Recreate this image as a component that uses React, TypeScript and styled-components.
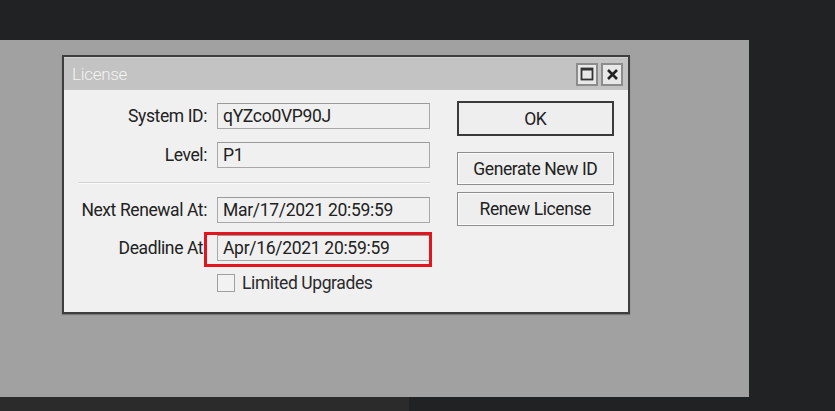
import React from "react";
import styled, { createGlobalStyle } from "styled-components";

const Global = createGlobalStyle`
  html, body { margin: 0; padding: 0; background: #212224; }
  body { font-family: Roboto, "Liberation Sans", sans-serif; }
`;

const Page = styled.div`
  width: 835px;
  height: 411px;
  display: flex;
  flex-direction: column;
  background: #212224;
  overflow: hidden;
`;

const TopBand = styled.div`
  height: 40px;
  flex: none;
`;

const Stage = styled.div`
  width: 749px;
  height: 357px;
  flex: none;
  background: #a1a1a1;
  padding: 15px 0 0 62px;
  box-sizing: border-box;
`;

const BottomBand = styled.div`
  display: flex;
  height: 14px;
`;

const BottomLeft = styled.div`
  width: 409px;
  background: #2b2b2b;
`;

const Dialog = styled.div`
  width: 568px;
  height: 259px;
  box-sizing: border-box;
  border: 2px solid #3e3e3e;
  background: #f0f0f0;
  display: flex;
  flex-direction: column;
  box-shadow: 0 1px 1px rgba(0, 0, 0, 0.25);
`;

const TitleBar = styled.div`
  height: 33px;
  flex: none;
  background: #c3c3c3;
  border-top: 1px solid #d0d0d0;
  box-sizing: border-box;
  display: flex;
  align-items: center;
  justify-content: space-between;
  padding: 0 5px 0 8px;
`;

const Title = styled.span`
  color: #f4f4f4;
  font-size: 17px;
  font-weight: 300;
  letter-spacing: -0.3px;
`;

const WinButtons = styled.div`
  display: flex;
  gap: 3px;
`;

const WinButton = styled.div`
  width: 22px;
  height: 23px;
  box-sizing: border-box;
  border: 2px solid #8c8c8c;
  background: #e8e8e8;
  display: flex;
  align-items: center;
  justify-content: center;
`;

const Body = styled.div`
  display: flex;
  padding: 11px 14px 0 0;
`;

const Form = styled.div`
  display: grid;
  grid-template-columns: 143px 213px;
  column-gap: 10px;
  align-items: center;
  width: 368px;
`;

const Label = styled.div<{ $mt?: number }>`
  text-align: right;
  font-size: 17.5px;
  color: #222;
  letter-spacing: -0.4px;
  white-space: nowrap;
  margin-top: ${(p) => p.$mt ?? 0}px;
`;

const Field = styled.div<{ $mt?: number }>`
  height: 26px;
  box-sizing: border-box;
  border: 1px solid #a8a8a8;
  border-top-color: #9a9a9a;
  background: #f0f0f0;
  display: flex;
  align-items: center;
  padding-left: 5px;
  font-size: 17.5px;
  color: #222;
  letter-spacing: -0.3px;
  white-space: nowrap;
  margin-top: ${(p) => p.$mt ?? 0}px;
`;

const Highlighted = styled.div`
  position: relative;
  margin-top: 12px;
  &::after {
    content: "";
    position: absolute;
    left: -13px;
    right: -2px;
    top: -3px;
    bottom: -6px;
    border: 3px solid #e3141c;
    pointer-events: none;
  }
`;

const Separator = styled.div`
  grid-column: 1 / span 2;
  margin: 14px 0 13px 14px;
  height: 0;
  border-top: 1px solid #d4d4d4;
  border-bottom: 1px solid #fafafa;
`;

const CheckRow = styled.label`
  grid-column: 2;
  display: flex;
  align-items: center;
  gap: 7px;
  margin-top: 12px;
  font-size: 17.5px;
  color: #2a2a2a;
  letter-spacing: -0.4px;
  white-space: nowrap;
`;

const Box = styled.span`
  width: 18px;
  height: 18px;
  box-sizing: border-box;
  border: 1px solid #a0a0a0;
  background: #f2f2f2;
`;

const Buttons = styled.div`
  display: flex;
  flex-direction: column;
  margin-left: 26px;
  width: 158px;
`;

const Button = styled.div<{ $default?: boolean; $mt?: number; $h: number }>`
  height: ${(p) => p.$h}px;
  box-sizing: border-box;
  border: ${(p) => (p.$default ? "2px solid #3a3a3a" : "1px solid #8e8e8e")};
  box-shadow: ${(p) => (p.$default ? "none" : "inset 0 0 0 1px #fbfbfb")};
  background: #eeeeee;
  display: flex;
  align-items: center;
  justify-content: center;
  font-size: 17.5px;
  color: #222;
  letter-spacing: -0.4px;
  white-space: nowrap;
  margin-top: ${(p) => p.$mt ?? 0}px;
`;

export default function App() {
  return (
    <Page>
      <Global />
      <TopBand />
      <Stage>
        <Dialog>
          <TitleBar>
            <Title>License</Title>
            <WinButtons>
              <WinButton>
                <svg width="14" height="14" viewBox="0 0 14 14">
                  <rect x="1.5" y="1.5" width="11" height="11" fill="none" stroke="#333" strokeWidth="1.8" />
                  <rect x="1" y="1" width="12" height="2.5" fill="#333" />
                </svg>
              </WinButton>
              <WinButton>
                <svg width="13" height="13" viewBox="0 0 13 13">
                  <path d="M2 2 L11 11 M11 2 L2 11" stroke="#222" strokeWidth="2.6" />
                </svg>
              </WinButton>
            </WinButtons>
          </TitleBar>
          <Body>
            <Form>
              <Label $mt={2}>System ID:</Label>
              <Field $mt={2}>qYZco0VP90J</Field>
              <Label $mt={13}>Level:</Label>
              <Field $mt={13}>P1</Field>
              <Separator />
              <Label>Next Renewal At:</Label>
              <Field>Mar/17/2021 20:59:59</Field>
              <Label $mt={12}>Deadline At:</Label>
              <Highlighted>
                <Field>Apr/16/2021 20:59:59</Field>
              </Highlighted>
              <CheckRow>
                <Box />
                Limited Upgrades
              </CheckRow>
            </Form>
            <Buttons>
              <Button $default $h={35}>OK</Button>
              <Button $mt={16} $h={33}>Generate New ID</Button>
              <Button $mt={7} $h={34}>Renew License</Button>
            </Buttons>
          </Body>
        </Dialog>
      </Stage>
      <BottomBand>
        <BottomLeft />
      </BottomBand>
    </Page>
  );
}
